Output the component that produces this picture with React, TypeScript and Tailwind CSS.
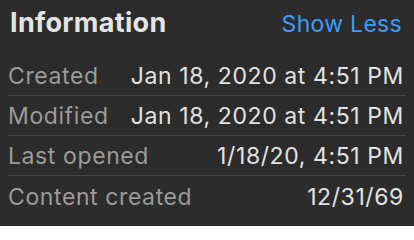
const rows = [
  { label: 'Created', value: 'Jan 18, 2020 at 4:51 PM' },
  { label: 'Modified', value: 'Jan 18, 2020 at 4:51 PM' },
  { label: 'Last opened', value: '1/18/20, 4:51 PM' },
  { label: 'Content created', value: '12/31/69' },
];

export default function App() {
  return (
    <div
      className="w-[414px] h-[226px] bg-[#2b2c2b] px-2 overflow-hidden"
      style={{ fontFamily: 'Inter, "Noto Sans", sans-serif' }}
    >
      {/* Header */}
      <div className="h-[56px] flex items-baseline justify-between pt-[6px]">
        <h2 className="text-[27px] leading-[34px] font-bold text-[#e4e4e4] pl-[2px] tracking-[0.3px]">
          Information
        </h2>
        <button className="text-[23px] leading-[34px] text-[#3d9bfc] pr-[4px] tracking-[0.3px]">
          Show Less
        </button>
      </div>

      {/* Rows */}
      <div className="flex flex-col">
        {rows.map((r, i) => (
          <div
            key={r.label}
            className={`h-[40px] pt-[2px] flex items-center justify-between text-[23px] tracking-[0.6px] ${
              i < rows.length - 1 ? 'border-b border-[#444544]' : ''
            }`}
          >
            <span className="text-[#9b9b9b]">{r.label}</span>
            <span className="text-[#e2e2e2] pr-[2px]">{r.value}</span>
          </div>
        ))}
      </div>
    </div>
  );
}
